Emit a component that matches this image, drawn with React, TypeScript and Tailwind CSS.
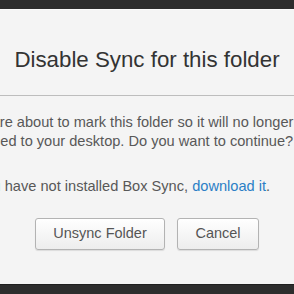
export default function App() {
  return (
    <div className="w-[294px] h-[294px] overflow-hidden bg-[#2d2d2d] flex flex-col" style={{ fontFamily: '"Liberation Sans", Arial, sans-serif' }}>
      <div className="h-[9px] shrink-0 bg-[#2d2d2d]" />
      <div className="h-[275px] shrink-0 bg-[#f4f4f4] border-t border-[#fafafa] flex flex-col">
        <div className="h-[86px] shrink-0 pt-[39px] border-b border-[#bdbdbd] text-center">
          <h1 className="text-[22.3px] text-[#333] leading-none whitespace-nowrap">Disable Sync for this folder</h1>
        </div>
        <div className="mt-[17px] text-[14.6px] leading-[19px] text-[#585858] whitespace-nowrap">
          <div className="ml-[-37px]">You are about to mark this folder so it will no longer</div>
          <div className="ml-[-50px]">be synced to your desktop. Do you want to continue?</div>
          <div className="ml-[-35px] mt-[26px]">
            If you have not installed Box Sync, <span className="text-[#2b7fc6]">download it</span>.
          </div>
        </div>
        <div className="mt-[22px] flex justify-center gap-[12px]">
          <button className="w-[130px] h-[32px] rounded-[3px] border border-[#b3b3b3] bg-gradient-to-b from-[#ffffff] to-[#ededed] text-[14.5px] text-[#555] shadow-[0_1px_1px_rgba(0,0,0,0.1)]">Unsync Folder</button>
          <button className="w-[82px] h-[32px] rounded-[3px] border border-[#b3b3b3] bg-gradient-to-b from-[#ffffff] to-[#ededed] text-[14.5px] text-[#555] shadow-[0_1px_1px_rgba(0,0,0,0.1)]">Cancel</button>
        </div>
      </div>
      <div className="flex-1 bg-[#2d2d2d] border-t border-[#1f1f1f]" />
    </div>
  );
}
